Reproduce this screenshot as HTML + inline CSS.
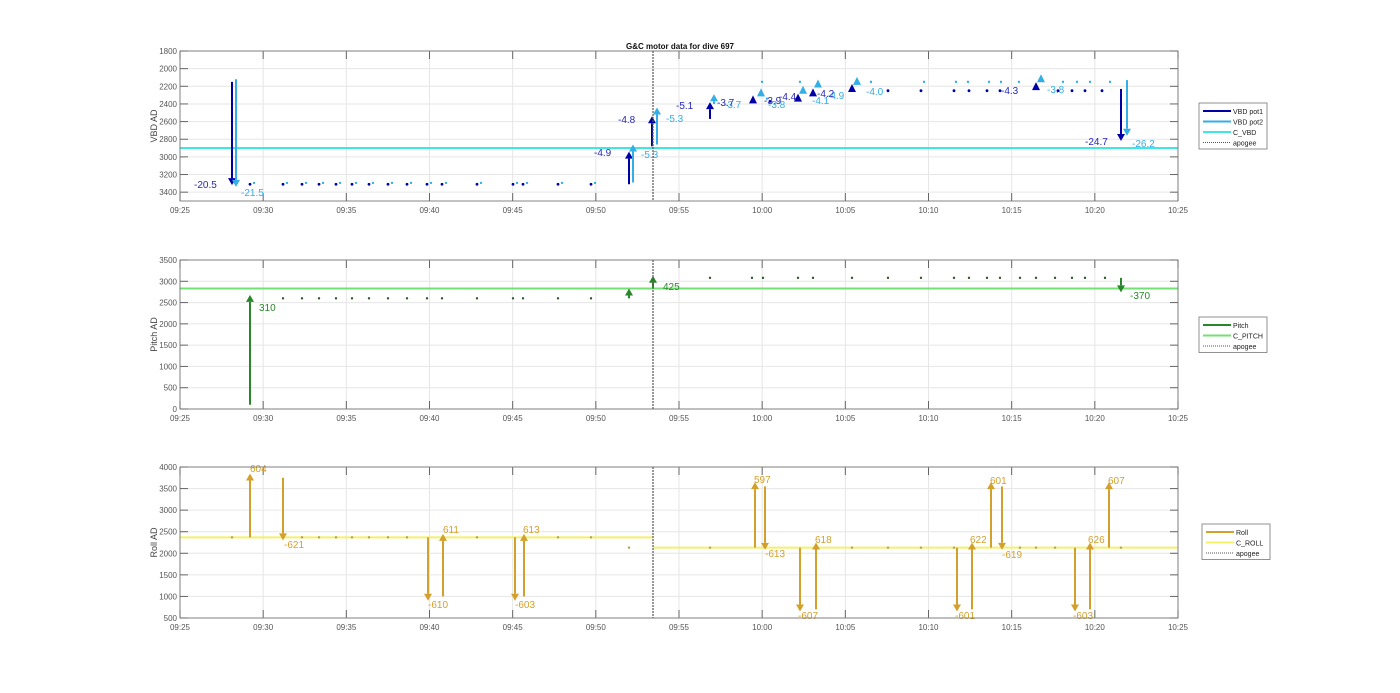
<!DOCTYPE html>
<html><head><meta charset="utf-8"><style>
html,body{margin:0;padding:0;background:#fff;}
svg{display:block;font-family:"Liberation Sans",sans-serif;}
</style></head><body>
<svg id="s" width="1400" height="693" xmlns="http://www.w3.org/2000/svg"></svg>
<script>
const S=document.getElementById('s');let h='';
const X0=180,X1=1178,PX=(X1-X0)/60;
const tx=m=>X0+m*PX;
const ax=[{t:51,b:201,lo:1800,hi:3500,inv:true,ticks:[1800,2000,2200,2400,2600,2800,3000,3200,3400],lab:'VBD AD'},
{t:260,b:409,lo:0,hi:3500,inv:false,ticks:[0,500,1000,1500,2000,2500,3000,3500],lab:'Pitch AD'},
{t:467,b:618,lo:500,hi:4000,inv:false,ticks:[500,1000,1500,2000,2500,3000,3500,4000],lab:'Roll AD'}];
function Y(a,v){const A=ax[a];const f=(v-A.lo)/(A.hi-A.lo);return A.inv?A.t+f*(A.b-A.t):A.b-f*(A.b-A.t);}
const xl=['09:25','09:30','09:35','09:40','09:45','09:50','09:55','10:00','10:05','10:10','10:15','10:20','10:25'];
ax.forEach((A,i)=>{
 h+=`<rect x="${X0}" y="${A.t}" width="${X1-X0}" height="${A.b-A.t}" fill="#fff"/>`;
 xl.forEach((l,k)=>{const x=tx(k*5);h+=`<line x1="${x}" y1="${A.t}" x2="${x}" y2="${A.b}" stroke="#e6e6e6" stroke-width="1"/>`;
  h+=`<line x1="${x}" y1="${A.b}" x2="${x}" y2="${A.b-8}" stroke="#666"/><line x1="${x}" y1="${A.t}" x2="${x}" y2="${A.t+8}" stroke="#666"/>`;
  h+=`<text x="${x}" y="${A.b+12}" font-size="8" fill="#555" text-anchor="middle">${l}</text>`;});
 A.ticks.forEach(v=>{const y=Y(i,v);h+=`<line x1="${X0}" y1="${y}" x2="${X1}" y2="${y}" stroke="#e6e6e6"/>`;
  h+=`<line x1="${X0}" y1="${y}" x2="${X0+8}" y2="${y}" stroke="#666"/><line x1="${X1}" y1="${y}" x2="${X1-8}" y2="${y}" stroke="#666"/>`;
  h+=`<text x="${X0-3}" y="${y+3}" font-size="8" fill="#555" text-anchor="end">${v}</text>`;});
 h+=`<text transform="translate(${X0-23},${(A.t+A.b)/2}) rotate(-90)" font-size="9" fill="#444" text-anchor="middle">${A.lab}</text>`;
});
const AP=653;
function dot(x,y,c,r=1.4){h+=`<circle cx="${x}" cy="${y}" r="${r}" fill="${c}"/>`;}
function arr(x,y1,y2,c,w=2){const up=y2<y1;const hh=7,hw=4;const ye=up?y2+hh:y2-hh;
 h+=`<line x1="${x}" y1="${y1}" x2="${x}" y2="${ye}" stroke="${c}" stroke-width="${w}"/>`;
 h+=`<polygon points="${x-hw},${ye} ${x+hw},${ye} ${x},${y2}" fill="${c}"/>`;}
function tri(x,y,c){h+=`<polygon points="${x-4},${y+3} ${x+4},${y+3} ${x},${y-5}" fill="${c}"/>`;}
function tx2(x,y,s,c,sz=10){h+=`<text x="${x}" y="${y}" font-size="${sz}" fill="${c}">${s}</text>`;}
const P1='#0000a8',P1L='#2828b8',P2='#33aee6',CV='#3ee6e6';
h+=`<line x1="${X0}" y1="${Y(0,2900)}" x2="${X1}" y2="${Y(0,2900)}" stroke="${CV}" stroke-width="2"/>`;
[250,283,302,319,336,352,369,388,407,427,442,477,513,523,558,591].forEach(x=>{dot(x,Y(0,3310),P1);dot(x+4,Y(0,3295),P2,1.2);});
[888,921,954,969,987,1000,1058,1072,1085,1102].forEach(x=>dot(x,Y(0,2250),P1));
[762,800,871,924,956,968,989,1001,1019,1063,1077,1090,1110].forEach(x=>dot(x,Y(0,2150),P2,1.2));
dot(767,Y(0,2340),P2,1.2);dot(770,Y(0,2370),P1);
arr(232,Y(0,2150),Y(0,3320),P1);arr(236,Y(0,2120),Y(0,3340),P2);
arr(629,Y(0,3310),Y(0,2940),P1);arr(633,Y(0,3290),Y(0,2860),P2);
arr(652,Y(0,2880),Y(0,2540),P1);arr(657,Y(0,2860),Y(0,2440),P2);
arr(710,Y(0,2570),Y(0,2380),P1);arr(714,Y(0,2400),Y(0,2290),P2);
arr(1121,Y(0,2230),Y(0,2820),P1);arr(1127,Y(0,2130),Y(0,2760),P2);
tri(753,Y(0,2360),P1);tri(761,Y(0,2280),P2);tri(798,Y(0,2340),P1);tri(803,Y(0,2250),P2);
tri(813,Y(0,2280),P1);tri(818,Y(0,2180),P2);tri(852,Y(0,2230),P1);tri(857,Y(0,2150),P2);
tri(1036,Y(0,2210),P1);tri(1041,Y(0,2120),P2);
tx2(194,188,'-20.5',P1L);tx2(241,196,'-21.5',P2);tx2(594,156,'-4.9',P1L);tx2(641,158,'-5.3',P2);
tx2(618,123,'-4.8',P1L);tx2(666,122,'-5.3',P2);tx2(676,109,'-5.1',P1L);tx2(724,108,'-3.7',P2);tx2(717,106,'-3.7',P1L);
tx2(768,108,'-3.8',P2);tx2(764,104,'-3.9',P1L);tx2(779,100,'-4.4',P1L);tx2(812,104,'-4.1',P2);tx2(827,99,'-4.9',P2);tx2(817,97,'-4.2',P1L);
tx2(866,95,'-4.0',P2);tx2(1001,94,'-4.3',P1L);tx2(1047,93,'-3.8',P2);tx2(1085,145,'-24.7',P1L);tx2(1132,147,'-26.2',P2);
const PG='#2a862a',CP='#72e072';
h+=`<line x1="${X0}" y1="${Y(1,2830)}" x2="${X1}" y2="${Y(1,2830)}" stroke="${CP}" stroke-width="2"/>`;
[283,302,319,336,352,369,388,407,427,442,477,513,523,558,591].forEach(x=>dot(x,Y(1,2600),'#2d5a2d',1.2));
[710,752,763,798,813,852,888,921,954,969,987,1000,1020,1036,1055,1072,1085,1105].forEach(x=>dot(x,Y(1,3080),'#2d5a2d',1.2));
arr(250,Y(1,100),Y(1,2680),PG);arr(629,Y(1,2600),Y(1,2830),PG);arr(653,Y(1,2850),Y(1,3130),PG);arr(1121,Y(1,3080),Y(1,2740),PG);
tx2(259,311,'310',PG);tx2(663,290,'425',PG);tx2(1130,299,'-370',PG);
const R='#d4a02c',CR='#f4f068';
h+=`<line x1="${X0}" y1="${Y(2,2370)}" x2="${AP}" y2="${Y(2,2370)}" stroke="${CR}" stroke-width="2"/>`;
h+=`<line x1="${AP}" y1="${Y(2,2130)}" x2="${X1}" y2="${Y(2,2130)}" stroke="${CR}" stroke-width="2"/>`;
[232,302,319,336,352,369,388,407,477,558,591].forEach(x=>dot(x,Y(2,2370),'#b8a040',1.2));
[629,710,852,888,921,954,1020,1036,1055,1121].forEach(x=>dot(x,Y(2,2130),'#b8a040',1.2));
const ra=[[250,2370,3850],[283,3750,2300],[428,2370,900],[443,1000,2450],[515,2370,900],[524,1000,2450],
[755,2130,3650],[765,3550,2080],[800,2130,650],[816,700,2250],[957,2130,650],[972,700,2250],[991,2130,3650],[1002,3550,2080],[1075,2130,650],[1090,700,2250],[1109,2130,3650]];
ra.forEach(a=>arr(a[0],Y(2,a[1]),Y(2,a[2]),R));
[[250,472,'604'],[284,548,'-621'],[428,608,'-610'],[443,533,'611'],[515,608,'-603'],[523,533,'613'],[754,483,'597'],[765,557,'-613'],[798,619,'-607'],[815,543,'618'],[955,619,'-601'],[970,543,'622'],[990,484,'601'],[1002,558,'-619'],[1073,619,'-603'],[1088,543,'626'],[1108,484,'607']].forEach(a=>tx2(a[0],a[1],a[2],R));
ax.forEach(A=>{h+=`<line x1="${AP}" y1="${A.t}" x2="${AP}" y2="${A.b}" stroke="#555" stroke-width="1.2" stroke-dasharray="2,1"/>`;});
ax.forEach(A=>{h+=`<rect x="${X0}" y="${A.t}" width="${X1-X0}" height="${A.b-A.t}" fill="none" stroke="#666" stroke-width="0.8"/>`;});
h+=`<text x="680" y="49" font-size="8" font-weight="bold" fill="#111" text-anchor="middle">G&amp;C motor data for dive 697</text>`;
function leg(x,y,items){const hgt=items.length*10.5+4;h+=`<rect x="${x}" y="${y}" width="68" height="${hgt}" fill="#fff" stroke="#777" stroke-width="0.8"/>`;
 items.forEach((it,i)=>{const yy=y+8+i*10.5;h+=`<line x1="${x+4}" y1="${yy}" x2="${x+32}" y2="${yy}" stroke="${it[1]}" stroke-width="${it[2]||2}" ${it[3]?'stroke-dasharray="1,1"':''}/>`;
 h+=`<text x="${x+34}" y="${yy+3}" font-size="7" fill="#222">${it[0]}</text>`;});}
leg(1199,103,[['VBD pot1',P1],['VBD pot2',P2],['C_VBD',CV],['apogee','#555',1,1]]);
leg(1199,317,[['Pitch',PG],['C_PITCH',CP],['apogee','#555',1,1]]);
leg(1202,524,[['Roll',R],['C_ROLL',CR],['apogee','#555',1,1]]);
S.innerHTML=h;
</script>
</body></html>
